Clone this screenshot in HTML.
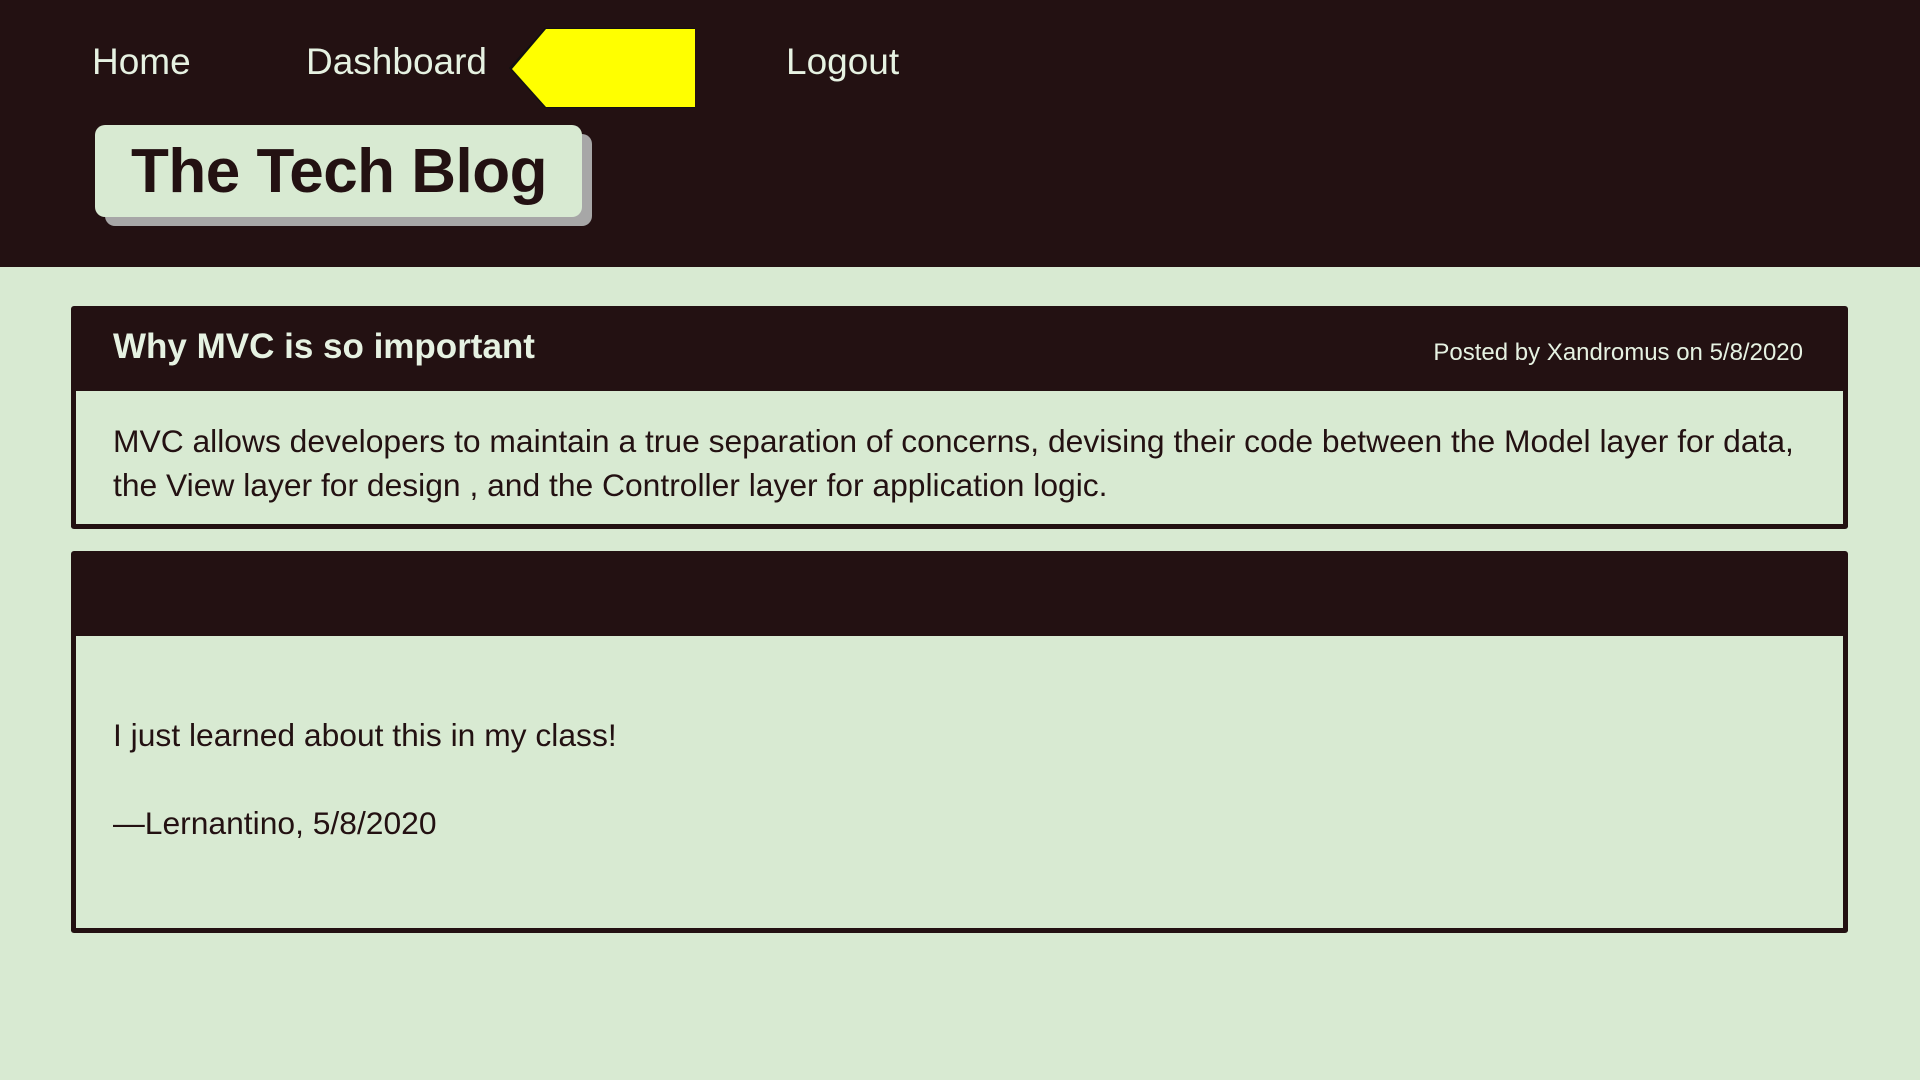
<!DOCTYPE html>
<html><head><meta charset="utf-8"><style>
*{margin:0;padding:0;box-sizing:border-box}
body{width:1920px;height:1080px;background:#d8ead2;font-family:"Liberation Sans",sans-serif;position:relative;overflow:hidden;color:#231112}
.hdr{position:absolute;left:0;top:0;width:1920px;height:267px;background:#231112}
.nav{position:absolute;top:39px;font-size:37px;color:#e6f2e2;line-height:45px}
.arrow{position:absolute;left:509px;top:28px;width:186px;height:80px}
.tb{position:absolute;left:95px;top:125px;width:487px;height:92px;background:#d8ead2;border-radius:10px;box-shadow:10px 9px 0 #a7a7a7}
.tb span{position:absolute;left:36px;top:11px;font-size:62px;font-weight:bold;color:#231112;line-height:72px;letter-spacing:-0.5px}
.card{position:absolute;left:71px;width:1777px;border:5px solid #231112;border-top:none;border-radius:3px}
.ch{background:#231112;height:85px;position:relative;color:#e6f2e2}
.ch .t{position:absolute;left:37px;top:21px;font-size:35px;font-weight:bold}
.ch .p{position:absolute;right:40px;top:33px;font-size:24px}
.cb{font-size:31.8px;line-height:44px;padding-left:37px}
</style></head><body>
<div class="hdr"></div>
<div class="nav" style="left:92px">Home</div>
<div class="nav" style="left:306px">Dashboard</div>
<svg class="arrow" viewBox="0 0 186 80"><polygon points="186,0 36,0 0,40 36,80 186,80" fill="#111"/><polygon points="186,0 37,0 3,40 37,78 186,78" fill="#ffff00" transform="translate(0,1)"/></svg>
<div class="nav" style="left:786px">Logout</div>
<div class="tb"><span>The Tech Blog</span></div>

<div class="card" style="top:306px;height:223px">
<div class="ch"><div class="t">Why MVC is so important</div><div class="p">Posted by Xandromus on 5/8/2020</div></div>
<div class="cb" style="padding-top:28px">MVC allows developers to maintain a true separation of concerns, devising their code between the Model layer for data,<br>the View layer for design , and the Controller layer for application logic.</div>
</div>

<div class="card" style="top:551px;height:382px">
<div class="ch"></div>
<div class="cb" style="padding-top:77px">I just learned about this in my class!</div>
<div class="cb" style="padding-top:44px">—Lernantino, 5/8/2020</div>
</div>
</body></html>
